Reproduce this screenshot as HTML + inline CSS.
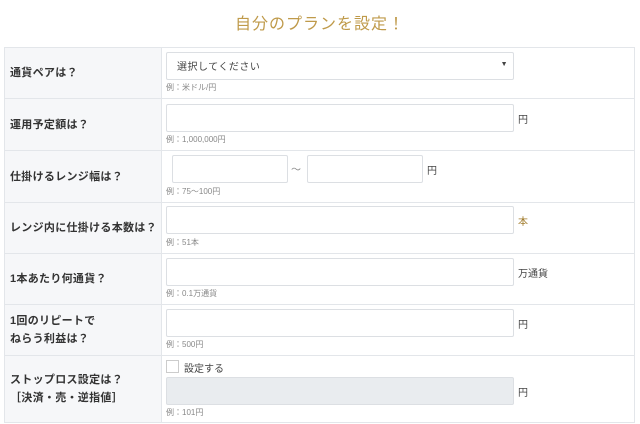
<!DOCTYPE html>
<html><head><meta charset="utf-8"><style>
*{margin:0;padding:0;box-sizing:border-box}
body{width:640px;height:424px;background:#fff;font-family:"Liberation Sans","Noto Sans CJK JP",sans-serif;position:relative;overflow:hidden;color:#333}
.t{position:absolute;top:10px;left:0;width:640px;text-align:center;font-size:16px;color:#bf9a4a;letter-spacing:1px}
.row{position:absolute;left:4px;width:631px;border-top:1px solid #e3e6ea;border-left:1px solid #e3e6ea;border-right:1px solid #e3e6ea}
.lab{position:absolute;left:0;top:0;bottom:0;width:157px;background:#f6f7f9;border-right:1px solid #e3e6ea;font-size:11px;font-weight:bold;display:flex;align-items:center;padding-left:5px;line-height:18px;letter-spacing:0.3px}
.in{position:absolute;height:28px;border:1px solid #dcdfe3;border-radius:2px;background:#fff}
.h{position:absolute;font-size:8px;color:#888}
.u{position:absolute;font-size:10px;color:#444}
</style></head><body>
<div class="t">自分のプランを設定！</div>

<div class="row" style="top:47px;height:51px"><div class="lab">通貨ペアは？</div></div>
<div class="in" style="left:166px;top:52px;width:348px;font-size:10px;color:#444;padding:5px 0 0 10px;letter-spacing:0.5px">選択してください<span style="position:absolute;right:5px;top:8px;font-size:7px">▼</span></div>
<div class="h" style="left:166px;top:82px">例：米ドル/円</div>

<div class="row" style="top:98px;height:52px"><div class="lab">運用予定額は？</div></div>
<div class="in" style="left:166px;top:104px;width:348px"></div>
<div class="u" style="left:518px;top:111px">円</div>
<div class="h" style="left:166px;top:134px">例：1,000,000円</div>

<div class="row" style="top:150px;height:52px"><div class="lab">仕掛けるレンジ幅は？</div></div>
<div class="in" style="left:172px;top:155px;width:116px"></div>
<div class="u" style="left:291px;top:161px;color:#888">〜</div>
<div class="in" style="left:307px;top:155px;width:116px"></div>
<div class="u" style="left:427px;top:162px">円</div>
<div class="h" style="left:166px;top:186px">例：75〜100円</div>

<div class="row" style="top:202px;height:51px"><div class="lab">レンジ内に仕掛ける本数は？</div></div>
<div class="in" style="left:166px;top:206px;width:348px"></div>
<div class="u" style="left:518px;top:213px;color:#a07a2a">本</div>
<div class="h" style="left:166px;top:237px">例：51本</div>

<div class="row" style="top:253px;height:51px"><div class="lab">1本あたり何通貨？</div></div>
<div class="in" style="left:166px;top:258px;width:348px"></div>
<div class="u" style="left:518px;top:265px">万通貨</div>
<div class="h" style="left:166px;top:288px">例：0.1万通貨</div>

<div class="row" style="top:304px;height:51px"><div class="lab">1回のリピートで<br>ねらう利益は？</div></div>
<div class="in" style="left:166px;top:309px;width:348px"></div>
<div class="u" style="left:518px;top:316px">円</div>
<div class="h" style="left:166px;top:339px">例：500円</div>

<div class="row" style="top:355px;height:68px;border-bottom:1px solid #e3e6ea"><div class="lab">ストップロス設定は？<br>［決済・売・逆指値］</div></div>
<div style="position:absolute;left:166px;top:360px;width:13px;height:13px;border:1px solid #ccc;background:#fff"></div>
<div class="u" style="left:184px;top:360px">設定する</div>
<div class="in" style="left:166px;top:377px;width:348px;background:#e9ecef"></div>
<div class="u" style="left:518px;top:384px">円</div>
<div class="h" style="left:166px;top:407px">例：101円</div>
</body></html>
